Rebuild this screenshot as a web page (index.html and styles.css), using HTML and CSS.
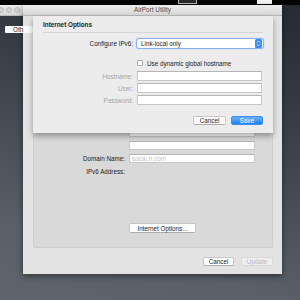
FILE: index.html
```html
<!DOCTYPE html>
<html lang="en">
  <head>
    <meta charset="UTF-8" />
    <meta name="viewport" content="width=device-width, initial-scale=1.0" />
    <title>AirPort Utility</title>
    <link rel="stylesheet" href="styles.css">
  </head>
  <body>
    <div class="menubar">
      <span class="tab tab_a"></span>
      <span class="tab tab_b"></span>
    </div>

    <!-- hovedvindue bag arket -->
    <div class="main_window">
      <div class="titlebar">
        <span class="light"></span>
        <span class="light"></span>
        <span class="light"></span>
      </div>
    </div>
    <div class="other_btn">Oth</div>

    <section class="edit_window">
      <div class="titlebar">AirPort Utility</div>
      <div class="edit_body">
        <div class="groupbox">
          <!-- rækkerne under arket ses ikke, kun felterne holder pladsen -->
          <div class="row"><label></label><input class="field" /></div>
          <div class="row"><label></label><input class="field" /></div>
          <div class="row"><label></label><input class="field" /></div>
          <div class="row"><label></label><input class="field" /></div>
          <div class="row"><label></label><input class="field" /></div>
          <div class="row"><label></label><input class="field" /></div>
          <div class="row"><label></label><input class="field" /></div>
          <div class="row"><label>Domain Name:</label><input class="field" placeholder="socal.rr.com" /></div>
          <div class="row"><label>IPv6 Address:</label></div>
          <button class="btn internet_btn">Internet Options...</button>
        </div>
        <div class="btn_row">
          <button class="btn edit_cancel">Cancel</button>
          <button class="btn edit_update" disabled>Update</button>
        </div>
      </div>
    </section>

    <section class="sheet">
      <h2>Internet Options</h2>
      <div class="row popup_row">
        <label>Configure IPv6:</label>
        <div class="popup">
          Link-local only
          <svg class="stepper" width="7" height="9" viewBox="0 0 7 9">
            <rect width="7" height="9" rx="1.5" fill="#3a8cf6" />
            <polyline points="2,3.6 3.5,2.1 5,3.6" fill="none" stroke="#fff" stroke-width="0.8" />
            <polyline points="2,5.4 3.5,6.9 5,5.4" fill="none" stroke="#fff" stroke-width="0.8" />
          </svg>
        </div>
      </div>
      <div class="row check_row">
        <label></label>
        <span class="box"></span>Use dynamic global hostname
      </div>
      <div class="row host_row"><label class="dim">Hostname:</label><input class="field" disabled /></div>
      <div class="row small_gap"><label class="dim">User:</label><input class="field" disabled /></div>
      <div class="row small_gap"><label class="dim">Password:</label><input class="field" type="password" disabled /></div>
      <div class="btn_row sheet_btns">
        <button class="btn sheet_cancel">Cancel</button>
        <button class="btn save">Save</button>
      </div>
    </section>
  </body>
</html>
```

FILE: styles.css
```css
body {
  margin: 0;
  width: 300px;
  height: 300px;
  overflow: hidden;
  position: relative;
  font-family: "Liberation Sans", Arial, sans-serif;
  font-size: 6.3px;
  color: #222;
  background: linear-gradient(195deg, #242a32 0%, #363c44 30%, #5a6068 80%, #5e646c 100%);
}

.menubar {
  position: absolute;
  left: 0;
  top: 0;
  width: 300px;
  height: 5px;
  background-color: #050505;
}

.tab {
  position: absolute;
  top: 0;
  height: 4px;
  box-sizing: border-box;
}

.tab_a {
  left: 178px;
  width: 19px;
  border: 1px solid #bdbdbd;
  border-top: none;
  background-color: #2a2a2a;
}

.tab_b {
  left: 257px;
  width: 15px;
  background-color: #f4f4f4;
}

.titlebar {
  height: 11px;
  box-sizing: border-box;
  border-bottom: 1px solid #b9b9b9;
  background: linear-gradient(#ececec, #d8d8d8);
}

.main_window {
  position: absolute;
  left: -2px;
  top: 5px;
  width: 40px;
}

.main_window .titlebar {
  display: flex;
  align-items: center;
  gap: 2px;
}

.light {
  width: 6px;
  height: 6px;
  box-sizing: border-box;
  border-radius: 50%;
  border: 1px solid #bcbcbc;
  background-color: #d2d2d2;
}

.other_btn {
  position: absolute;
  left: 5px;
  top: 26px;
  width: 28px;
  height: 7px;
  box-sizing: border-box;
  padding-left: 8px;
  border-radius: 1px;
  background-color: #fbfbfb;
  line-height: 7px;
  white-space: nowrap;
  z-index: 2;
}

.edit_window {
  position: absolute;
  left: 23px;
  top: 5px;
  width: 259px;
  height: 269px;
  display: flex;
  flex-direction: column;
  background-color: #e3e3e3;
  box-shadow: 0 2px 6px rgba(0, 0, 0, 0.45);
  z-index: 1;
}

.edit_window .titlebar {
  text-align: center;
  line-height: 10px;
  font-size: 6.4px;
  color: #4d4d4d;
}

.edit_body {
  flex: 1;
  display: flex;
  flex-direction: column;
  padding: 24px 9px 0 10px;
}

.groupbox {
  height: 208px;
  box-sizing: border-box;
  display: flex;
  flex-direction: column;
  padding: 22px 0 14px;
  border: 1px solid #cecece;
  border-radius: 2px;
  background-color: #d9d9d9;
}

.row {
  display: flex;
  align-items: center;
  gap: 4px;
  height: 9px;
}

.groupbox .row + .row {
  margin-top: 4px;
}

.row label {
  width: 91px;
  flex-shrink: 0;
  text-align: right;
}

.field {
  width: 126px;
  height: 9px;
  box-sizing: border-box;
  margin: 0;
  padding: 0 2px;
  border: 1px solid #c6c6c6;
  border-top-color: #b5b5b5;
  background-color: #fff;
  font: inherit;
  line-height: 7px;
  color: #222;
  outline: none;
}

.field::placeholder {
  color: #c2c2c2;
}

.btn {
  height: 9px;
  box-sizing: border-box;
  margin: 0;
  padding: 0;
  border: 1px solid #c6c6c6;
  border-bottom-color: #adadad;
  border-radius: 2px;
  background-color: #fff;
  font: inherit;
  line-height: 7px;
  color: #222;
}

.internet_btn {
  margin-top: auto;
  margin-left: 95px;
  width: 67px;
  height: 10px;
}

.btn_row {
  display: flex;
  justify-content: flex-end;
  gap: 7px;
  margin-top: 9px;
}

.edit_cancel {
  width: 31px;
}

.edit_update {
  width: 32px;
  border-color: #d9d9d9;
  background-color: #eeeeee;
  color: #b9b9b9;
}

/* ark med internet options */
.sheet {
  position: absolute;
  left: 33px;
  top: 16px;
  width: 240px;
  height: 117px;
  box-sizing: border-box;
  padding: 5px 10px 0;
  background-color: #ececec;
  box-shadow: 0 3px 6px rgba(0, 0, 0, 0.35);
  z-index: 3;
}

.sheet h2 {
  margin: 0;
  padding-bottom: 3px;
  border-bottom: 1px solid #d6d6d6;
  font-size: 6.35px;
  line-height: 8px;
}

.sheet .row label {
  width: 90px;
}

.sheet .field {
  width: 125px;
  height: 10px;
}

.popup_row {
  margin-top: 6px;
}

.popup {
  position: relative;
  width: 126px;
  height: 9px;
  box-sizing: border-box;
  padding-left: 4px;
  border-radius: 2px;
  background-color: #fff;
  box-shadow: 0 0 0 1px #86b3f1, 0 0 1.5px 1px #a9c9f5;
  line-height: 9px;
}

.stepper {
  position: absolute;
  right: 1px;
  top: 0;
}

.check_row {
  height: 8px;
  margin-top: 11px;
}

.box {
  width: 6px;
  height: 6px;
  box-sizing: border-box;
  border: 1px solid #a9a9a9;
  border-radius: 1px;
  background-color: #fff;
}

.host_row {
  height: 10px;
  margin-top: 4px;
}

.small_gap {
  height: 10px;
  margin-top: 2px;
}

.dim {
  color: #a4a4a4;
}

.sheet_btns {
  gap: 5px;
  margin-top: 11px;
}

.sheet_cancel {
  width: 33px;
}

.save {
  width: 32px;
  border: 1px solid #3f8cf2;
  background: linear-gradient(#6bb2fb, #1c80fa);
  color: #fff;
}
```
